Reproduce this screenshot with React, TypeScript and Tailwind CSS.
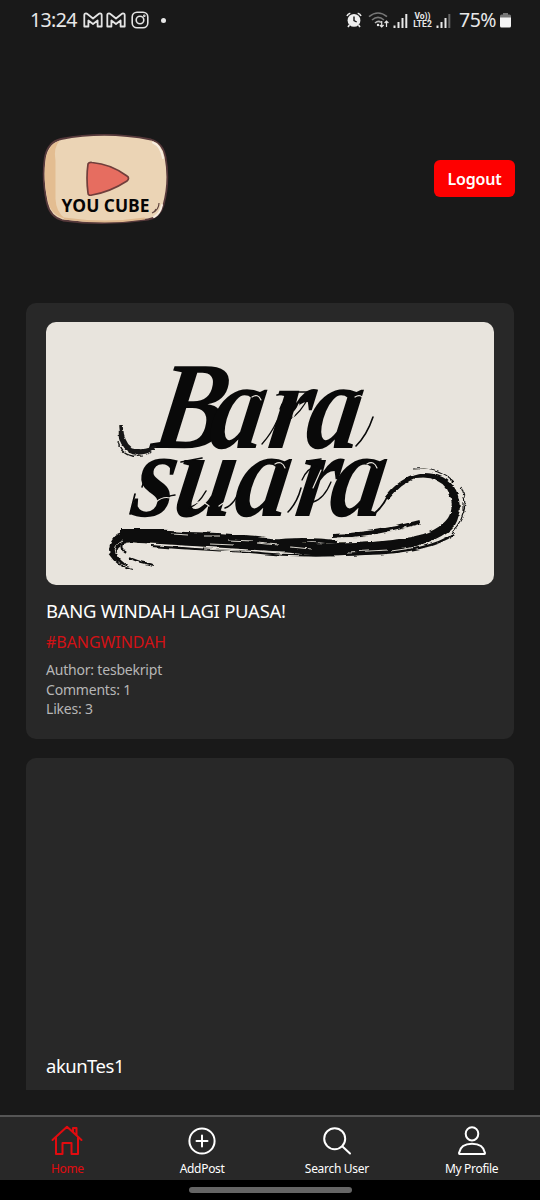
import type { ReactNode } from "react";

function GmailGlyph() {
  return (
    <svg className="h-4 w-5" viewBox="0 0 20 16" fill="none" stroke="#e4e4e4" strokeWidth="1.8" strokeLinejoin="round">
      <path d="M1.3 3.2Q1.3 1.3 3 1.3Q3.7 1.3 4.4 2L10 6.5L15.6 2Q16.3 1.3 17 1.3Q18.7 1.3 18.7 3.2V14.5H14.6V8.5L10 12L5.4 8.5V14.5H1.3Z" />
    </svg>
  );
}

function Signal({ weak = false }: { weak?: boolean }) {
  return (
    <svg className="h-4 w-[15px]" viewBox="0 0 15 16" fill="#e8e8e8">
      <rect x="0.5" y="12.5" width="2" height="2.5" />
      <rect x="4.5" y="9" width="2" height="6" />
      <rect x="8.5" y="5" width="2" height="10" />
      <rect x="12.3" y="1" width="2" height="14" fill={weak ? "#666" : "#e8e8e8"} />
    </svg>
  );
}

function StatusBar() {
  return (
    <div className="flex h-10 shrink-0 items-center pl-[30px] pr-[29px] text-[#e8e8e8]">
      <span className="w-[47px] whitespace-nowrap text-[19.5px] leading-none tracking-[-0.6px]">13:24</span>
      <div className="ml-[6px] flex items-center gap-[3px]">
        <GmailGlyph />
        <GmailGlyph />
      </div>
      <svg className="ml-[5px] h-[18px] w-[18px]" viewBox="0 0 18 18" fill="none" stroke="#e4e4e4" strokeWidth="1.6">
        <rect x="1.2" y="1.2" width="15.6" height="15.6" rx="4.8" />
        <circle cx="9" cy="9" r="3.8" />
        <circle cx="13.3" cy="4.7" r="0.5" />
      </svg>
      <span className="ml-[12px] h-[5px] w-[5px] rounded-full bg-[#e8e8e8]" />
      <div className="ml-auto flex items-center">
        <svg className="h-4 w-4" viewBox="0 0 16 16" fill="#efefef">
          <circle cx="8" cy="8.4" r="6.4" />
          <path d="M1 4Q1.8 1.7 4.3 1.2M15 4Q14.2 1.7 11.7 1.2M3.4 13L2 15M12.6 13L14 15" stroke="#efefef" strokeWidth="1.6" fill="none" />
          <path d="M8 4.6V8.6L10.7 10" stroke="#191919" strokeWidth="1.4" fill="none" />
        </svg>
        <svg className="ml-[6px] h-[18px] w-[22px]" viewBox="0 0 22 18" fill="none" strokeWidth="1.6">
          <path d="M1 5.7Q10 -1.7 19 5.7M4 9Q10 3.7 16 9" stroke="#777" />
          <path d="M7 12Q10.5 9 13 11.5" stroke="#b5b5b5" />
          <circle cx="10" cy="14" r="1.2" fill="#eee" stroke="none" />
          <path d="M13.7 10V16M11.8 14L13.7 16L15.6 14M18.5 16V10M16.6 12L18.5 10L20.4 12" stroke="#e5e5e5" strokeWidth="1.2" />
        </svg>
        <div className="ml-[3px] flex pt-px"><Signal /></div>
        <div className="ml-[4px] flex w-[21px] flex-col items-center whitespace-nowrap font-[Roboto,sans-serif] text-[8.5px] font-bold leading-[8.5px]">
          <span className="block h-[8px] leading-[8px]">Vo))</span>
          <span className="block h-[8px] leading-[9px]">LTE2</span>
        </div>
        <div className="ml-[3px] flex pt-px"><Signal weak /></div>
        <span className="ml-[8px] w-[41px] whitespace-nowrap text-[19.5px] leading-none tracking-[-0.5px]">75%</span>
        <svg className="h-4 w-[11px]" viewBox="0 0 11 16">
          <path d="M3 1H8V2.5H9.5Q11 2.5 11 4V6H0V4Q0 2.5 1.5 2.5H3Z" fill="#777" />
          <path d="M0 5.5H11V14Q11 15.5 9.5 15.5H1.5Q0 15.5 0 14Z" fill="#f4f4f4" />
        </svg>
      </div>
    </div>
  );
}

function Logo() {
  return (
    <svg className="h-[92px] w-[128px]" viewBox="0 0 128 92">
      <path d="M20 7Q64-1.5 110 7.5Q122 11 124.5 25Q129 50 122.5 73Q119 85.5 107 87.5Q64 94 22 88.5Q9 85 6 71Q0.5 46 4 25Q7 10 20 7Z" fill="#ebd4b5" stroke="#56393b" strokeWidth="1.8" />
      <path d="M19 8.5Q12 15 14.5 29V67Q15 80 24 86.5Q11 84 7 70Q1.5 46 5 25Q8 12 19 8.5Z" fill="#e3bd91" />
      <path d="M23 86.5Q64 92.5 104 86.5" fill="none" stroke="#dfb98f" strokeWidth="2" />
      <path d="M112 10.5Q120 14 122 26M113 85Q119 82 121 73" fill="none" stroke="#f8eee1" strokeWidth="2" strokeLinecap="round" />
      <path d="M47 32Q48 30 51 30.5Q70 32 86 44Q89 46 86 49Q69 60 51 63Q47 64 47 61Q45 46 47 32Z" fill="#e66d60" stroke="#703e3b" strokeWidth="1.7" />
      <text x="20.5" y="80" textLength="88" lengthAdjust="spacingAndGlyphs" fontFamily="Open Sans, sans-serif" fontWeight="700" fontSize="18" fill="#050505">YOU CUBE</text>
      <path d="M118 71Q118 78 111 81M115 77Q114 80 111 81" fill="none" stroke="#60443e" strokeWidth="1.2" />
    </svg>
  );
}

function CoverArt() {
  return (
    <svg className="h-[263px] w-[448px] rounded-[10px] bg-[#e8e4dd]" viewBox="46 322 448 263">
      <defs>
        <filter id="brush" x="-10%" y="-30%" width="120%" height="160%">
          <feTurbulence type="fractalNoise" baseFrequency="0.07 0.22" numOctaves="3" seed="4" result="n" />
          <feDisplacementMap in="SourceGraphic" in2="n" scale="3.5" xChannelSelector="R" yChannelSelector="G" result="d" />
          <feGaussianBlur in="d" stdDeviation="0.55" />
        </filter>
      </defs>
      <g fill="#090909" fontFamily="Liberation Serif, serif" fontWeight="700" fontStyle="italic">
        <text transform="translate(150 448) skewX(-9) scale(0.87 1)" x="0 65 133 176" fontSize="125">Bara</text>
        <text transform="translate(130 516) skewX(-9) scale(0.89 1)" x="0 46 114 183 221" fontSize="122">suara</text>
      </g>
      <g fill="none" stroke="#090909" strokeLinecap="round">
        <path d="M356 446Q367 435 373 417" strokeWidth="1.6" />
        <path d="M262 444Q271 434 277 421M289 420Q301 413 309 396M280 409Q283 398 296 397M313 502Q324 499 331 482M302 480Q307 468 317 466" strokeWidth="1.3" />
        <path d="M142 487Q144 478 151 475M164 499Q167 496 175 495M189 508Q198 505 206 491M225 508Q235 505 243 483M288 512Q297 503 301 488" strokeWidth="1.5" />
        <path d="M376 512Q384 505 388 495" strokeWidth="2" />
        <path d="M277 395L295 392L309 392M307 461L321 459M181 462L202 458M130 514L135 494" strokeWidth="1.7" />
      </g>
      <g fill="none" stroke="#e8e4dd" strokeWidth="1.2" strokeLinecap="round">
        <path d="M252 397Q258 393 261 400M355 397Q361 393 364 400M275 464Q282 460 285 468M367 464Q374 460 377 468" />
        <path d="M299 404L292 420M321 470L313 488M156 502Q163 496 170 498M194 504Q201 499 209 506M219 506Q225 501 233 500" />
      </g>
      <g fill="none" stroke="#171715" filter="url(#brush)">
        <path d="M155 446Q144 454 131 449Q122 443 121 425" strokeWidth="3.5" />
        <path d="M121 431Q120 447 133 452Q144 454 153 448" strokeWidth="4.5" />
        <path d="M118 442Q122 459 143 456" strokeWidth="1.2" />
      </g>
      <g filter="url(#brush)">
        <path d="M385 497Q400 477 420 473Q446 472 456 490Q464 509 455 525Q443 540 403 550Q358 558 311 555Q264 550 208 547Q164 544 139 543Q121 540 117 550Q116 560 132 567Q109 561 109 549Q111 532 132 530Q171 530 207 534Q263 538 312 543Q370 545 411 537Q438 532 448 518Q456 505 447 489Q437 475 416 478Q402 483 389 499Z" fill="#0b0b0a" />
        <g fill="none" stroke="#10100f">
          <path d="M121 531L164 531M155 539Q207 542 250 540M177 534Q221 534 266 539M271 542Q302 538 337 542M333 536Q374 535 420 522" strokeWidth="4" />
          <path d="M151 546Q208 550 250 552Q301 558 365 554Q429 552 454 534" strokeWidth="2.2" />
          <path d="M413 469Q438 467 453 482M461 487Q472 512 451 533M463 502L463 510" strokeWidth="1.1" />
          <path d="M124 539Q118 547 126 553M129 558L140 562L153 565M109 553Q118 567 133 570" strokeWidth="1.8" />
        </g>
        <path d="M172 534L188 535M204 536L220 536M228 540L253 541M257 543L278 545M262 551L284 552M204 549L239 551M338 538L365 537M348 552L388 550M387 532L408 527M122 541Q113 544 116 554M391 551Q419 548 440 538M210 544L234 545M291 547L311 549" fill="none" stroke="#d8d5cd" strokeWidth="1" />
      </g>
    </svg>
  );
}

function Tab({ label, active = false, children }: { label: string; active?: boolean; children: ReactNode }) {
  return (
    <div className={active ? "flex flex-1 flex-col items-center pt-[8px] text-[#e20b0f]" : "flex flex-1 flex-col items-center pt-[8px] text-white"}>
      <svg className="h-8 w-8" viewBox="0 0 32 32" fill="none" stroke="currentColor" strokeWidth="2" strokeLinecap="round" strokeLinejoin="round">
        {children}
      </svg>
      <span className="mt-[4px] whitespace-nowrap text-[12px] leading-[16px] tracking-[-0.3px]">{label}</span>
    </div>
  );
}

export default function App() {
  return (
    <main className="flex h-[1200px] w-[540px] flex-col overflow-hidden bg-[#191919] font-['Noto_Sans',sans-serif] text-white">
      <StatusBar />
      <header className="flex h-[263px] shrink-0 items-start justify-between pl-[41px] pr-[25px] pt-[92px]">
        <Logo />
        <button className="mt-[28px] flex h-[37px] w-[81px] items-center justify-center rounded-[6px] bg-[#fe0000] text-[16px] font-semibold tracking-[-0.2px]">Logout</button>
      </header>
      <section className="flex h-[787px] shrink-0 flex-col gap-[19px] overflow-hidden px-[26px]">
        <article className="h-[436px] shrink-0 rounded-[10px] bg-[#282828] px-5 pt-[19px]">
          <CoverArt />
          <h2 className="mt-[12px] whitespace-nowrap text-[18.5px] leading-[27px] tracking-[-0.28px]">BANG WINDAH LAGI PUASA!</h2>
          <p className="mt-[7px] text-[16px] leading-[22px] tracking-[-0.05px] text-[#d21115]">#BANGWINDAH</p>
          <div className="mt-[7px] text-[14px] leading-[19.5px] tracking-[-0.2px] text-[#b6b6b6]">
            <p>Author: tesbekript</p>
            <p>Comments: 1</p>
            <p>Likes: 3</p>
          </div>
        </article>
        <article className="flex h-[436px] shrink-0 flex-col rounded-[10px] bg-[#282828] px-5 pt-[19px]">
          <div className="h-[263px] shrink-0" />
          <h2 className="mt-[12px] text-[18.5px] leading-[27px] tracking-[-0.5px]">akunTes1</h2>
        </article>
      </section>
      <nav className="mt-[25px] flex h-[65px] shrink-0 border-t-2 border-[#555] bg-[#282828] pr-[1px]">
        <Tab label="Home" active>
          <path d="M1.5 15L16 1.8L30.5 15M5 12.5V29H11.5V18H20.5V29H27V12.5M22 7V3H25.5V10" />
        </Tab>
        <Tab label="AddPost">
          <circle cx="16" cy="16" r="12.6" />
          <path d="M10.5 16H21.5M16 10.5V21.5" />
        </Tab>
        <Tab label="Search User">
          <circle cx="13.7" cy="13.7" r="10.5" />
          <path d="M21.5 21.5L29 28.5" />
        </Tab>
        <Tab label="My Profile">
          <ellipse cx="16" cy="8.8" rx="6.3" ry="6.6" />
          <path d="M3.5 29Q3 29 3 28C4.2 21.5 9.6 18.8 16 18.8S27.8 21.5 29 28Q29 29 28.5 29Z" />
        </Tab>
      </nav>
      <div className="flex h-5 shrink-0 items-center justify-center bg-black">
        <div className="h-[6px] w-[163px] rounded-full bg-[#666]" />
      </div>
    </main>
  );
}
